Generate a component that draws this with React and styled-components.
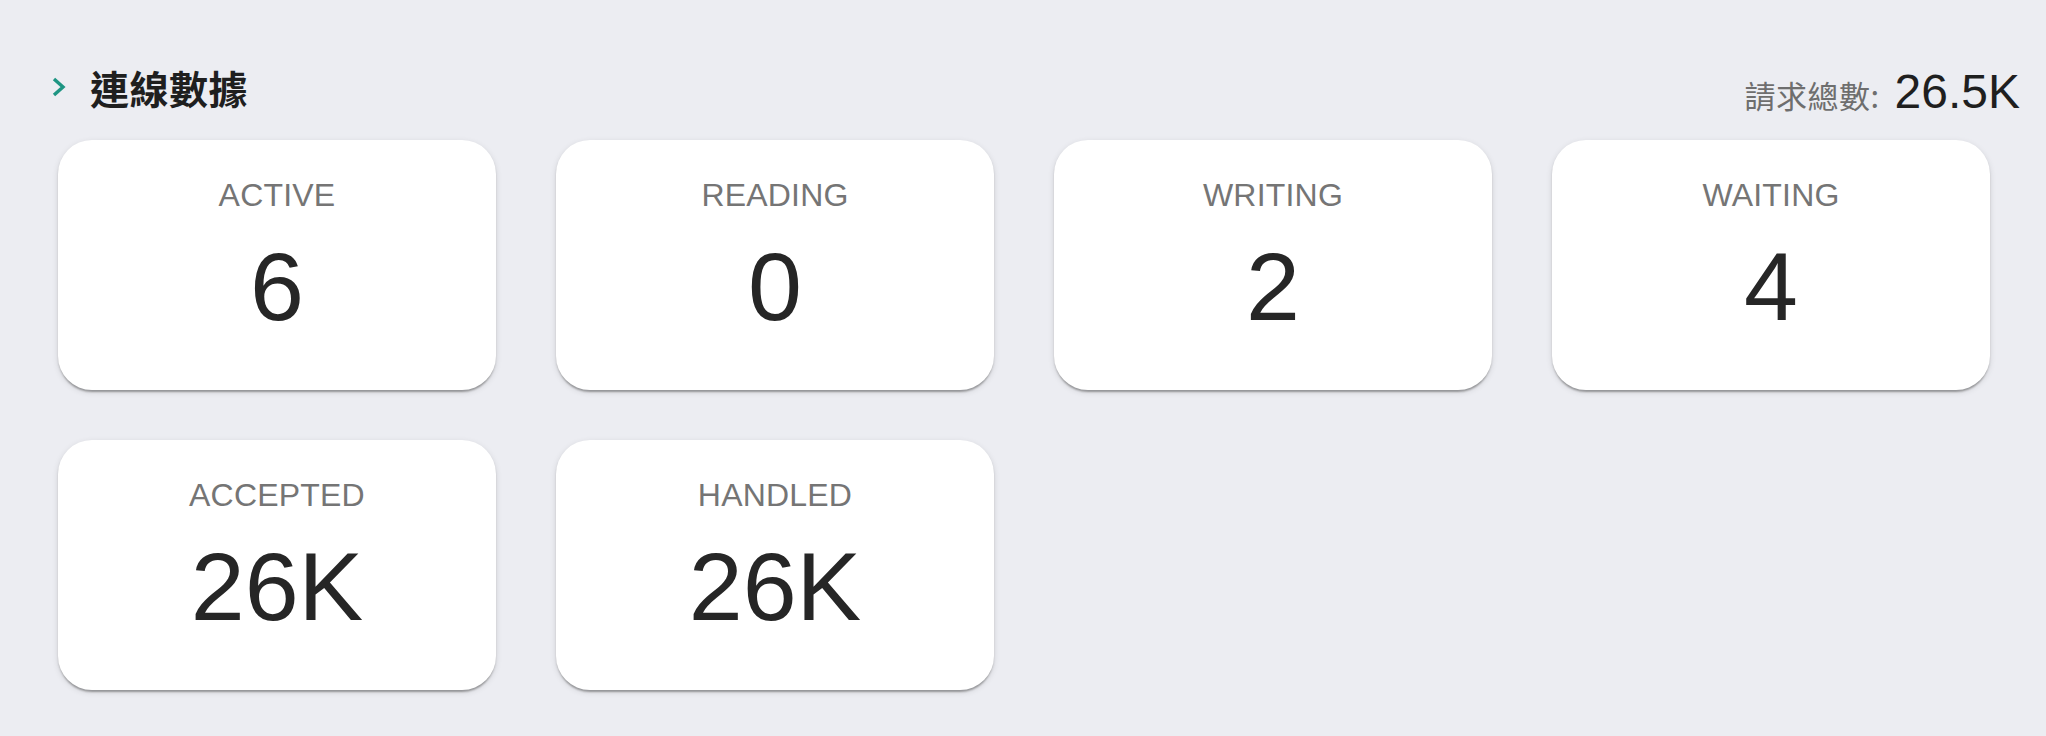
import React from "react";
import styled, { createGlobalStyle } from "styled-components";

const GlobalStyle = createGlobalStyle`
  html, body {
    margin: 0;
    padding: 0;
    background: #ecedf2;
  }
  body {
    font-family: "Liberation Sans", Arial, "Noto Sans CJK TC", sans-serif;
    color: #222;
  }
`;

const Page = styled.div`
  padding: 55px 26px 40px 52px;
  min-height: 100vh;
  box-sizing: border-box;
`;

const Header = styled.div`
  display: flex;
  justify-content: space-between;
  align-items: center;
  height: 64px;
`;

const TitleGroup = styled.div`
  display: flex;
  align-items: center;
  gap: 24px;
`;

const Chevron = styled.svg`
  width: 14px;
  height: 20px;
  flex: none;
`;

const Title = styled.h2`
  margin: 0;
  font-family: "Noto Sans CJK TC", "Noto Sans", sans-serif;
  font-size: 39px;
  font-weight: 700;
  line-height: 64px;
  color: #1f1f1f;
  letter-spacing: 0.5px;
`;

const Total = styled.div`
  display: flex;
  align-items: baseline;
  gap: 15px;
  padding-top: 8px;
`;

const TotalLabel = styled.span`
  font-family: "Noto Sans CJK TC", sans-serif;
  font-size: 31px;
  font-weight: 400;
  color: #6e6e6e;
  letter-spacing: 0.5px;
`;

const TotalValue = styled.span`
  font-family: "Liberation Sans", Arial, sans-serif;
  font-size: 48px;
  color: #1f1f1f;
`;

const Grid = styled.div`
  display: grid;
  grid-template-columns: repeat(4, 438px);
  column-gap: 60px;
  row-gap: 50px;
  margin: 21px 0 0 6px;
`;

const Card = styled.div`
  background: #fff;
  border-radius: 34px;
  height: 250px;
  box-sizing: border-box;
  display: flex;
  flex-direction: column;
  align-items: center;
  padding-top: 31px;
  box-shadow: 0 4px 2px -2px rgba(0, 0, 0, 0.2), 0 2px 2px 0 rgba(0, 0, 0, 0.14),
    0 2px 6px 0 rgba(0, 0, 0, 0.12);
`;

const Label = styled.div`
  font-family: "Liberation Sans", Arial, sans-serif;
  font-size: 32px;
  line-height: 48px;
  color: #757575;
  letter-spacing: 0.2px;
`;

const Value = styled.div`
  font-family: "Liberation Sans", Arial, sans-serif;
  font-size: 97px;
  line-height: 116px;
  margin-top: 10px;
  color: #262626;
`;

const stats = [
  { label: "ACTIVE", value: "6" },
  { label: "READING", value: "0" },
  { label: "WRITING", value: "2" },
  { label: "WAITING", value: "4" },
  { label: "ACCEPTED", value: "26K" },
  { label: "HANDLED", value: "26K" },
];

export default function App() {
  return (
    <>
      <GlobalStyle />
      <Page>
        <Header>
          <TitleGroup>
            <Chevron viewBox="0 0 14 20">
              <path
                d="M2 2 L11 10 L2 18"
                fill="none"
                stroke="#1e9583"
                strokeWidth="3.4"
                strokeLinecap="butt"
                strokeLinejoin="miter"
              />
            </Chevron>
            <Title>連線數據</Title>
          </TitleGroup>
          <Total>
            <TotalLabel>請求總數:</TotalLabel>
            <TotalValue>26.5K</TotalValue>
          </Total>
        </Header>
        <Grid>
          {stats.map((s) => (
            <Card key={s.label}>
              <Label>{s.label}</Label>
              <Value>{s.value}</Value>
            </Card>
          ))}
        </Grid>
      </Page>
    </>
  );
}
